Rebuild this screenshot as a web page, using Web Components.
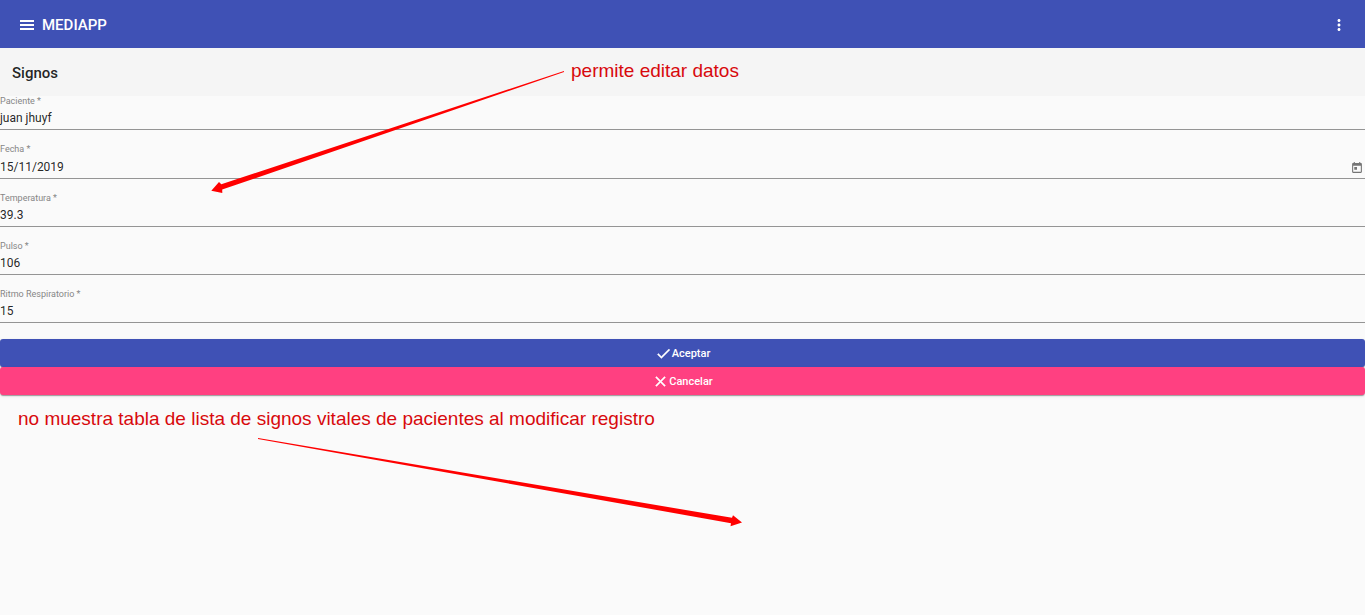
<!DOCTYPE html>
<html lang="es">
<head>
<meta charset="utf-8">
<meta name="viewport" content="width=device-width, initial-scale=1">
<title>MEDIAPP - Signos</title>
<style>
  html, body { margin: 0; background: #fafafa; }
  body { font-family: Roboto, "Liberation Sans", sans-serif; color: rgba(0,0,0,.87); }
</style>
</head>
<body>
<medi-app></medi-app>

<script>
class Base extends HTMLElement {
  render(html) {
    if (!this.shadowRoot) this.attachShadow({ mode: "open" }).innerHTML = html;
  }
}

customElements.define("medi-toolbar", class extends Base {
  connectedCallback() {
    this.render(`
    <style>
      :host { display: block; background: #3f51b5; color: #fff; }
      header { display: flex; align-items: center; justify-content: space-between; height: 48px; padding: 0 17px 0 18px; }
      .brand { display: flex; align-items: center; gap: 6px; }
      h1 { margin: 0; font-size: 15px; line-height: 20px; font-weight: 500; padding-top: 2px; }
      button { display: flex; border: 0; padding: 2px 0 0; margin: 0; background: none; color: inherit; }
      svg { display: block; fill: currentColor; }
    </style>
    <header>
      <div class="brand">
        <button type="button" aria-label="Abrir menú"><svg width="18" height="18" viewBox="0 0 18 18"><path d="M2 4h14v2H2zM2 8h14v2H2zM2 12h14v2H2z"/></svg></button>
        <h1><slot></slot></h1>
      </div>
      <button type="button" aria-label="Más opciones"><svg width="18" height="18" viewBox="0 0 24 24"><path d="M12 8c1.1 0 2-.9 2-2s-.9-2-2-2-2 .9-2 2 .9 2 2 2zm0 2c-1.1 0-2 .9-2 2s.9 2 2 2 2-.9 2-2-.9-2-2-2zm0 6c-1.1 0-2 .9-2 2s.9 2 2 2 2-.9 2-2-.9-2-2-2z"/></svg></button>
    </header>`);
  }
});

customElements.define("medi-section-title", class extends Base {
  connectedCallback() {
    this.render(`
    <style>
      :host { display: flex; align-items: center; height: 48px; padding: 2px 12px 0; box-sizing: border-box; background: #f5f5f5; }
      h2 { margin: 0; font-size: 15px; line-height: 20px; font-weight: 500; }
    </style>
    <h2><slot></slot></h2>`);
  }
});

customElements.define("medi-field", class extends Base {
  connectedCallback() {
    const date = this.hasAttribute("date");
    this.render(`
    <style>
      :host { display: block; border-bottom: 1px solid #949494; padding-bottom: 3px; }
      label { display: block; font-size: 9px; line-height: 10px; color: #868686; }
      .row { display: flex; align-items: flex-end; gap: 4px; margin-top: 4px; }
      input { flex: 1; min-width: 0; height: 16px; box-sizing: border-box; border: 0; padding: 0; margin: 0; outline: 0;
        background: none; font: 400 12px/16px Roboto, "Liberation Sans", sans-serif; color: rgba(0,0,0,.87); }
      button { display: flex; border: 0; padding: 4px 0 1px; margin: 0 2px 0 0; background: none; color: #757575; }
      svg { display: block; fill: currentColor; }
    </style>
    <label for="control"><slot></slot></label>
    <div class="row">
      <input id="control" type="text" required>
      ${date ? `<button type="button" aria-label="Abrir calendario"><svg width="12" height="12" viewBox="1 1 22 22"><path d="M19 3h-1V1h-2v2H8V1H6v2H5c-1.11 0-1.99.9-1.99 2L3 19c0 1.1.89 2 2 2h14c1.1 0 2-.9 2-2V5c0-1.1-.9-2-2-2zm0 16H5V8h14v11zM7 10h5v5H7z"/></svg></button>` : ""}
    </div>`);
    const input = this.shadowRoot.querySelector("input");
    input.setAttribute("value", this.getAttribute("value") || "");
  }
});

customElements.define("medi-button", class extends Base {
  connectedCallback() {
    const icons = {
      done: "M9 16.2L4.8 12l-1.4 1.4L9 19 21 7l-1.4-1.4L9 16.2z",
      clear: "M19 6.41L17.59 5 12 10.59 6.41 5 5 6.41 10.59 12 5 17.59 6.41 19 12 13.41 17.59 19 19 17.59 13.41 12 19 6.41z"
    };
    this.render(`
    <style>
      :host { display: block; }
      button { display: flex; align-items: center; justify-content: center; width: 100%; height: 28px; border: 0; padding: 1px 0 0;
        border-radius: 3px; color: #fff; background: var(--button-color, #3f51b5);
        font: 500 11px/17px Roboto, "Liberation Sans", sans-serif;
        box-shadow: 0 2px 1px -1px rgba(0,0,0,.2), 0 1px 1px rgba(0,0,0,.14), 0 1px 3px rgba(0,0,0,.12); }
      svg { display: block; fill: currentColor; stroke: currentColor; stroke-width: .6; }
    </style>
    <button type="button"><svg width="17" height="17" viewBox="0 0 24 24"><path d="${icons[this.getAttribute("icon")]}"/></svg><span><slot></slot></span></button>`);
  }
});

customElements.define("medi-note", class extends Base {
  connectedCallback() {
    this.render(`
    <style>
      :host { position: absolute; left: var(--x); top: var(--y); white-space: nowrap; color: #d8090d;
        font: 400 19px/24px "Liberation Sans", Arial, sans-serif; pointer-events: none; }
    </style>
    <slot></slot>`);
  }
});

customElements.define("medi-arrows", class extends Base {
  connectedCallback() {
    this.render(`
    <style>
      :host { position: absolute; left: 0; top: 0; pointer-events: none; }
      svg { display: block; fill: #f00; }
    </style>
    <svg width="760" height="540" viewBox="0 0 760 540" aria-hidden="true">
      <path d="M564 71L221.300 184.200L219 182L211.300 190.700L222.300 193L222.200 189.600L564 72Z"/>
      <path d="M258 438L732 517.800L733 515.300L742 522.600L730.500 526.300L731 523.200L258 439Z"/>
    </svg>`);
  }
});

customElements.define("medi-app", class extends Base {
  connectedCallback() {
    this.render(`
    <style>
      :host { display: block; position: relative; min-height: 100vh; }
      form { display: flex; flex-direction: column; margin: 0; }
      .fields { display: flex; flex-direction: column; gap: 14px; }
      .actions { display: flex; flex-direction: column; margin-top: 16px; }
      .cancel { --button-color: #ff4081; }
      .edit { --x: 571px; --y: 59px; }
      .table { --x: 18px; --y: 407px; }
    </style>
    <medi-toolbar>MEDIAPP</medi-toolbar>
    <main>
      <medi-section-title>Signos</medi-section-title>
      <form>
        <div class="fields">
          <medi-field value="juan jhuyf">Paciente *</medi-field>
          <medi-field date value="15/11/2019">Fecha *</medi-field>
          <medi-field value="39.3">Temperatura *</medi-field>
          <medi-field value="106">Pulso *</medi-field>
          <medi-field value="15">Ritmo Respiratorio *</medi-field>
        </div>
        <div class="actions">
          <medi-button icon="done">Aceptar</medi-button>
          <medi-button class="cancel" icon="clear">Cancelar</medi-button>
        </div>
      </form>
    </main>
    <medi-arrows></medi-arrows>
    <medi-note class="edit">permite editar datos</medi-note>
    <medi-note class="table">no muestra tabla de lista de signos vitales de pacientes al modificar registro</medi-note>`);
  }
});
</script>
</body>
</html>
